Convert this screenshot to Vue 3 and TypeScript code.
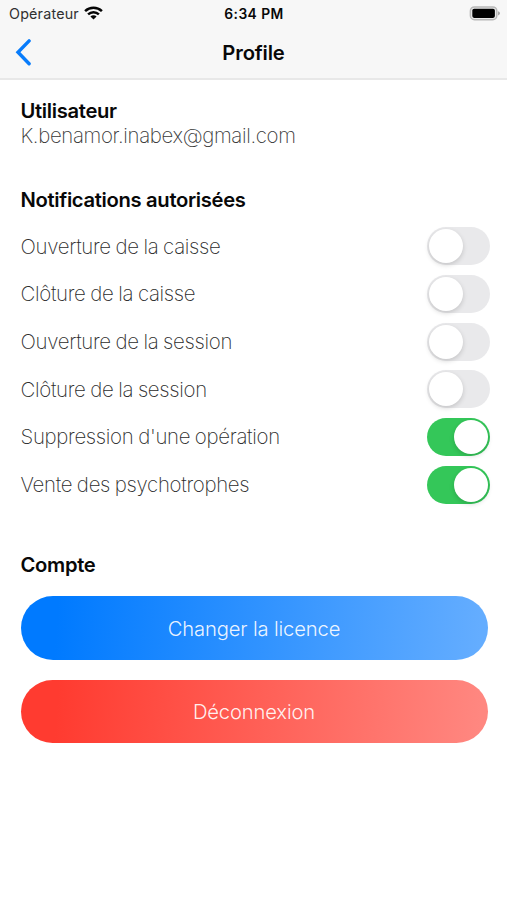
<script setup lang="ts">
import { ref } from 'vue'

interface NotificationSetting {
  id: string
  label: string
  enabled: boolean
}

const email = 'K.benamor.inabex@gmail.com'

const settings = ref<NotificationSetting[]>([
  { id: 'register-open', label: 'Ouverture de la caisse', enabled: false },
  { id: 'register-close', label: 'Clôture de la caisse', enabled: false },
  { id: 'session-open', label: 'Ouverture de la session', enabled: false },
  { id: 'session-close', label: 'Clôture de la session', enabled: false },
  { id: 'operation-delete', label: "Suppression d'une opération", enabled: true },
  { id: 'psychotropic-sale', label: 'Vente des psychotrophes', enabled: true },
])

function toggle(setting: NotificationSetting): void {
  setting.enabled = !setting.enabled
}
</script>

<template>
  <div class="screen">
    <header class="header">
      <div class="status-bar">
        <div class="carrier">
          <span class="carrier-name">Opérateur</span>
          <svg class="wifi" width="19" height="14" viewBox="0 0 19 14">
            <g fill="none" stroke="#050505" stroke-width="2.5">
              <path d="M1.1 5.2A12.1 12.1 0 0 1 17.9 5.2" />
              <path d="M4.1 8.3A7.8 7.8 0 0 1 14.9 8.3" />
            </g>
            <path d="M6.4 10.5A4.4 4.4 0 0 1 12.6 10.5L9.5 13.6Z" fill="#050505" />
          </svg>
        </div>
        <span class="time">6:34 PM</span>
        <svg class="battery" width="32" height="16" viewBox="0 0 32 16">
          <rect x="1.4" y="0.9" width="26.4" height="12.8" rx="4" fill="#e9e9e9" stroke="#b8b8b8" stroke-width="1.5" />
          <rect x="3.3" y="2.7" width="22.6" height="9.2" rx="1.8" fill="#000" />
          <path d="M29 5.2Q31 5.8 31 7.3Q31 8.8 29 9.4Z" fill="#a8a8a8" />
        </svg>
      </div>
      <div class="nav-bar">
        <button class="back" type="button" aria-label="Retour">
          <svg width="18" height="28" viewBox="0 0 18 28">
            <path d="M14.1 2.9L3 14.3L14.1 25.7" fill="none" stroke="#087cfb" stroke-width="3.4" stroke-linecap="round" stroke-linejoin="miter" />
          </svg>
        </button>
        <h1 class="title">Profile</h1>
      </div>
    </header>

    <main class="content">
      <section class="user">
        <h2 class="heading">Utilisateur</h2>
        <p class="email">{{ email }}</p>
      </section>

      <section class="notifications">
        <h2 class="heading">Notifications autorisées</h2>
        <ul class="settings">
          <li v-for="setting in settings" :key="setting.id" class="setting">
            <span class="label">{{ setting.label }}</span>
            <button
              class="switch"
              :class="{ on: setting.enabled }"
              type="button"
              role="switch"
              :aria-checked="setting.enabled"
              :aria-label="setting.label"
              @click="toggle(setting)"
            >
              <span class="knob"></span>
            </button>
          </li>
        </ul>
      </section>

      <section class="account">
        <h2 class="heading">Compte</h2>
        <div class="actions">
          <button class="action licence" type="button">Changer la licence</button>
          <button class="action logout" type="button">Déconnexion</button>
        </div>
      </section>
    </main>
  </div>
</template>

<style>
body {
  margin: 0;
  background: #fff;
}
</style>

<style scoped>
.screen {
  box-sizing: border-box;
  min-height: 900px;
  background: #fff;
  color: #080808;
  font-family: Inter, "Liberation Sans", sans-serif;
}

button {
  padding: 0;
  border: 0;
  font: inherit;
  cursor: pointer;
}

.header {
  box-sizing: border-box;
  height: 80px;
  border-bottom: 2px solid #e8e8e8;
  background: #f7f7f7;
}

.status-bar {
  display: grid;
  grid-template-columns: 1fr auto 1fr;
  align-items: center;
  height: 27px;
  padding: 0 6px 0 9px;
}

.carrier {
  display: flex;
  align-items: center;
  gap: 5px;
}

.wifi {
  margin-bottom: 2px;
}

.carrier-name {
  color: #303030;
  font-size: 14.3px;
  line-height: 18px;
  letter-spacing: 0.2px;
}

.time {
  margin-right: 2px;
  font-size: 13.8px;
  font-weight: 600;
  line-height: 18px;
  letter-spacing: 0.45px;
}

.battery {
  justify-self: end;
}

.nav-bar {
  display: grid;
  grid-template-columns: 60px 1fr 60px;
  align-items: center;
  height: 50px;
}

.back {
  display: flex;
  width: 34px;
  padding-left: 15px;
  background: none;
}

.title {
  margin: 0;
  padding-top: 1px;
  font-size: 20.2px;
  font-weight: 600;
  line-height: 24px;
  letter-spacing: -0.15px;
  text-align: center;
}

.content {
  padding: 18px 17px 0 20.5px;
}

.heading {
  margin: 0;
  font-size: 20.2px;
  font-weight: 600;
  line-height: 25px;
  letter-spacing: -0.32px;
}

.email {
  margin: 0;
  color: #383838;
  font-size: 20.4px;
  font-weight: 200;
  line-height: 25px;
  letter-spacing: -0.33px;
}

.notifications {
  margin-top: 39px;
}

.settings {
  margin: 10.4px 0 0;
  padding: 0;
  list-style: none;
}

.setting {
  display: flex;
  align-items: center;
  justify-content: space-between;
  height: 47.7px;
}

.label {
  padding-top: 1px;
  color: #2c2c2c;
  font-size: 20.4px;
  font-weight: 200;
  line-height: 26px;
  letter-spacing: -0.3px;
  word-spacing: -0.7px;
}

.switch {
  box-sizing: border-box;
  display: flex;
  width: 63px;
  height: 38px;
  padding: 2px;
  border-radius: 19px;
  background: #e9e9eb;
}

.switch.on {
  justify-content: flex-end;
  background: #34c759;
}

.knob {
  width: 34px;
  height: 34px;
  border-radius: 50%;
  background: #fff;
  box-shadow: 0 2px 5px rgb(0 0 0 / 16%);
}

.account {
  margin-top: 43.5px;
}

.actions {
  display: grid;
  gap: 20px;
  margin: 19.3px 2.5px 0 0;
}

.action {
  height: 63.5px;
  border-radius: 32px;
  color: rgb(255 255 255 / 92%);
  font-size: 20.2px;
  font-weight: 300;
  letter-spacing: -0.15px;
}

.licence {
  padding-top: 1px;
  background: linear-gradient(94deg, #007aff 8%, #64adff 98%);
}

.logout {
  background: linear-gradient(94deg, #ff3b30 8%, #ff8780 98%);
}
</style>
